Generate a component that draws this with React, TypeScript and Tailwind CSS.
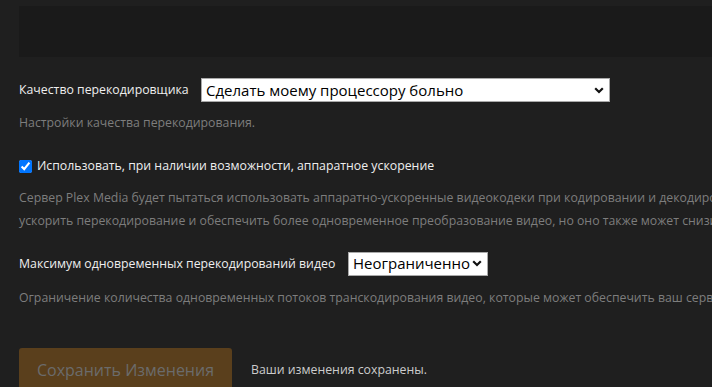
import React from "react"

const font = { fontFamily: '"Open Sans", "Noto Sans", sans-serif' }

function Chevron() {
  return (
    <svg width="10" height="7" viewBox="0 0 10 7" className="shrink-0">
      <path d="M1.2 1.2 5 5 8.8 1.2" fill="none" stroke="#111" strokeWidth="2.2" />
    </svg>
  )
}

function Select({ value, width }: { value: string; width: string }) {
  return (
    <div
      className={`flex items-center justify-between h-[24px] bg-white border border-[#a9a9a9] pl-[4px] pr-[5px] ${width}`}
    >
      <span className="text-[15px] leading-none text-black whitespace-nowrap">{value}</span>
      <Chevron />
    </div>
  )
}

export default function App() {
  return (
    <div className="w-[712px] h-[387px] overflow-hidden bg-[#1f1f1f] whitespace-nowrap" style={font}>
      <div className="ml-[19px] mt-[6px] h-[51px] w-[720px] bg-[#1a1a1a]" />

      <div className="pl-[19px] w-[1000px]">
        <div className="flex items-center mt-[21px] h-[24px]">
          <span className="text-[12.3px] text-[#eeeeee] w-[182px]">Качество перекодировщика</span>
          <Select value="Сделать моему процессору больно" width="w-[409px]" />
        </div>
        <p className="mt-[12px] text-[12.3px] text-[#7d7d7d]">Настройки качества перекодирования.</p>

        <label className="flex items-center mt-[25px] gap-[5px]">
          <input type="checkbox" defaultChecked className="w-[13px] h-[13px] m-0 accent-[#0075ff]" />
          <span className="text-[12.3px] text-[#eeeeee]">Использовать, при наличии возможности, аппаратное ускорение</span>
        </label>
        <p className="mt-[10px] text-[12.3px] leading-[23px] text-[#7d7d7d]">
          Сервер Plex Media будет пытаться использовать аппаратно-ускоренные видеокодеки при кодировании и декодировании видео. Аппаратное ускорение может значительно
          <br />
          ускорить перекодирование и обеспечить более одновременное преобразование видео, но оно также может снизить качество видео.
        </p>

        <div className="flex items-center mt-[20px] h-[24px]">
          <span className="text-[12.3px] text-[#eeeeee] w-[329px]">Максимум одновременных перекодирований видео</span>
          <Select value="Неограниченно" width="w-[140px]" />
        </div>
        <p className="mt-[13px] text-[12.3px] text-[#7d7d7d]">
          Ограничение количества одновременных потоков транскодирования видео, которые может обеспечить ваш сервер.
        </p>

        <div className="flex items-center mt-[41px] gap-[19px]">
          <button className="w-[213px] h-[44px] rounded-[3px] bg-[#5a3f1c] text-[16px] text-[#6b6b6b]">
            Сохранить Изменения
          </button>
          <span className="text-[12.3px] text-[#cccccc]">Ваши изменения сохранены.</span>
        </div>
      </div>
    </div>
  )
}
